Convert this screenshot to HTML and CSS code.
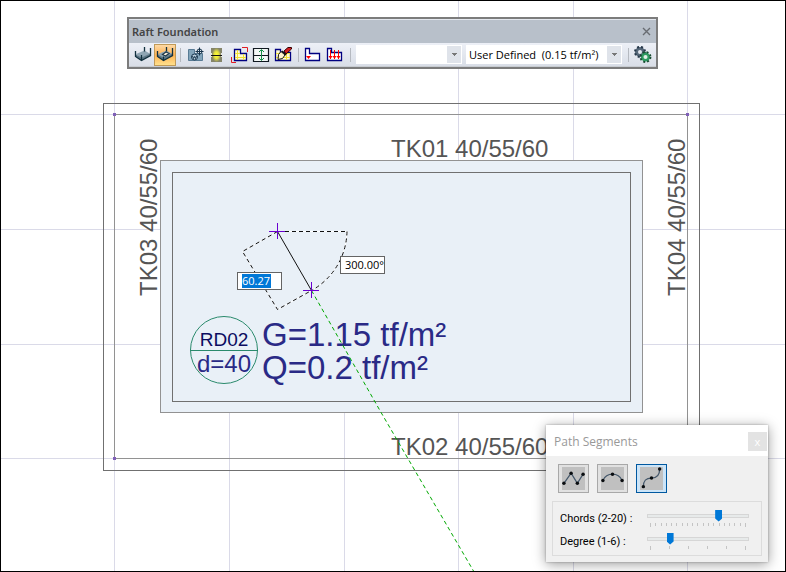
FILE: index.html
```
<!DOCTYPE html>
<html lang="en">
<head>
<meta charset="utf-8">
<title>Raft Foundation</title>
<link rel="stylesheet" href="styles.css">
</head>
<body>
<main class="workspace">
  <svg class="drawing" role="img" aria-label="Raft foundation plan">
    <g class="grid">
      <path d="M114.5 0V2000M229.5 0V2000M344.5 0V2000M458.5 0V2000M573.5 0V2000M687.5 0V2000"/>
      <path d="M0 114.5H3000M0 229.5H3000M0 344.5H3000M0 458.5H3000"/>
    </g>
    <rect class="edge" x="103.5" y="103.5" width="596" height="367"/>
    <rect class="axis" x="114.5" y="114.5" width="573" height="344"/>
    <rect class="slab" x="160.5" y="160.5" width="482" height="252"/>
    <rect class="edge" x="172.5" y="172.5" width="458" height="229"/>
    <g class="node">
      <rect x="113" y="113" width="3" height="3"/>
      <rect x="686" y="113" width="3" height="3"/>
      <rect x="113" y="457" width="3" height="3"/>
    </g>
    <g class="beam-name">
      <text x="391" y="157">TK01 40/55/60</text>
      <text x="391" y="455">TK02 40/55/60</text>
      <text transform="translate(157 296) rotate(-90)">TK03 40/55/60</text>
      <text transform="translate(685 296) rotate(-90)">TK04 40/55/60</text>
    </g>
    <g class="load">
      <text x="262" y="346">G=1.15 tf/m²</text>
      <text x="262" y="379">Q=0.2 tf/m²</text>
    </g>
    <g class="tag">
      <circle cx="224" cy="350" r="33.5"/>
      <path d="M190 350.5H258"/>
      <text class="tag-name" x="224" y="346">RD02</text>
      <text class="tag-depth" x="224" y="372">d=40</text>
    </g>
    <g class="rubber-back">
      <path d="M277.5 231.5L242.5 251.5L277.5 309.5L311.5 290.5M285 231.5H347M347 231.5A69 69 0 0 1 311.5 290.5"/>
    </g>
    <g class="rubber">
      <path d="M277.5 231.5L242.5 251.5L277.5 309.5L311.5 290.5M285 231.5H347M347 231.5A69 69 0 0 1 311.5 290.5"/>
    </g>
    <path class="segment" d="M277.5 231.5L311.5 290.5"/>
    <path class="guide" d="M311.5 290.5L380.5 411.5L473.5 571"/>
    <path class="cross" d="M269 231.5H285M277.5 223V239M303 290.5H319M311.5 282V298"/>
  </svg>

  <label class="readout readout-length"><input class="picked" type="text" value="60.27" aria-label="Length"></label>
  <label class="readout readout-angle"><input type="text" value="300.00°" aria-label="Angle"></label>

  <section class="toolbar" aria-label="Raft Foundation">
    <header class="toolbar-title">
      <h1>Raft Foundation</h1>
      <button type="button" class="toolbar-close" aria-label="Close">
        <svg width="9" height="9" viewBox="0 0 9 9"><path d="M1 1L8 8M8 1L1 8" stroke="#686c72" stroke-width="1.4"/></svg>
      </button>
    </header>
    <div class="tools">
      <button type="button" class="tool" aria-label="Slab">
        <svg viewBox="0 0 22 22"><path d="M4 10L12.500 6.500L18.500 10L9.500 14.500Z" fill="#8fa5b3"/><path d="M4 10.500L9.500 13.500L18.500 9.500V11.500L9.500 16.500L4 13Z" fill="#5d7686"/><path d="M3.500 7V12.500L9.500 16.500L18.500 11.500V4M12.500 3V7.500M9.500 11V16.500" fill="none" stroke="#12303e" stroke-width="1.300"/></svg>
      </button>
      <button type="button" class="tool active" aria-label="Slab opening">
        <svg viewBox="0 0 22 22"><path d="M4 10L12.500 6.500L18.500 10L9.500 14.500Z" fill="#8fa5b3"/><path d="M4 10.500L9.500 13.500L18.500 9.500V11.500L9.500 16.500L4 13Z" fill="#5d7686"/><path d="M3.500 7V12.500L9.500 16.500L18.500 11.500V4M12.500 3V7.500M9.500 12.500V16.500" fill="none" stroke="#12303e" stroke-width="1.300"/><path d="M8.500 10.500L12 8L15 9.500L11.500 12Z" fill="#fff3df" stroke="#203848" stroke-width="1.200"/></svg>
      </button>
      <span class="divider"></span>
      <button type="button" class="tool" aria-label="Slab properties">
        <svg viewBox="0 0 22 22"><path d="M4.500 5.500H10.500V9.500H18.500V16.500H4.500Z" fill="#83a5bb" stroke="#587b94"/><circle cx="10.500" cy="13" r="3" fill="#b9d0df" stroke="#17344c"/><path d="M8.500 12L9.500 14.500L10.500 12.500L11.500 14.500L12.500 12" fill="none" stroke="#17344c"/><circle cx="15.500" cy="7.500" r="2.500" fill="#d9e3ea" stroke="#17344c"/><path d="M11.500 7.500H19.500M15.500 3.500V11.500" stroke="#17344c"/></svg>
      </button>
      <button type="button" class="tool" aria-label="Slab strip">
        <svg viewBox="0 0 22 22"><defs><radialGradient id="glow"><stop offset="0" stop-color="#ff3"/><stop offset=".5" stop-color="#e6e23c"/><stop offset="1" stop-color="#85856a"/></radialGradient></defs><path d="M5 4H16V18H5Z" fill="#85856a"/><path d="M6 4H15V18H6Z" fill="url(#glow)"/><path d="M5 9V13M16 9V13" stroke="#e4e6ea" stroke-width="2"/><path d="M5 11.500H16" stroke="#111"/></svg>
      </button>
      <button type="button" class="tool" aria-label="Slab region">
        <svg viewBox="0 0 22 22"><path d="M6.500 5.500H12.500V9.500H18.500V16.500H6.500Z" fill="#fffbd0" stroke="#000080" stroke-width="1.300"/><path d="M7 9.500H12M7 13.500H18M9.500 6V16M15.500 10V16" stroke="#f0df35"/><path d="M14 3.500H19.500V8M3.500 13V18.500H8" fill="none" stroke="#e11b22"/></svg>
      </button>
      <button type="button" class="tool" aria-label="Stretch">
        <svg viewBox="0 0 22 22"><path d="M3.500 4.500H18.500V17.500H3.500ZM3.500 11.500H18.500" fill="#f4f8f7" stroke="#101820" stroke-width="1.200"/><path d="M11.500 6V16M9 8L11.500 5.500L14 8M9 14L11.500 16.500L14 14" fill="none" stroke="#149047"/></svg>
      </button>
      <button type="button" class="tool" aria-label="Clean region">
        <svg viewBox="0 0 22 22"><path d="M3.500 5.500H8.500V8.500H18.500V16.500H3.500Z" fill="#fffbd0" stroke="#000080" stroke-width="1.300"/><path d="M4 9.500H18M4 13.500H18M14.500 9V16" stroke="#f0df35"/><path d="M12 7L16 3.500H19.500V5L14 10Z" fill="#d51d20" stroke="#300"/><path d="M10 7L14 11" stroke="#111" stroke-width="1.500"/><path d="M9 7.500L13 11L10.500 14.500L6 15.500L6.500 10.500Z" fill="#fff4cf" stroke="#111"/></svg>
      </button>
      <span class="divider"></span>
      <button type="button" class="tool" aria-label="Point load">
        <svg viewBox="0 0 22 22"><path d="M3.500 4.500H7.500V9.500H17.500V16.500H3.500Z" fill="#fff" stroke="#000080" stroke-width="1.300"/><path d="M4 12H9L6.500 15Z" fill="#f00"/></svg>
      </button>
      <button type="button" class="tool" aria-label="Distributed load">
        <svg viewBox="0 0 22 22"><path d="M3.500 4.500H7.500V8.500H17.500V16.500H3.500Z" fill="#fff" stroke="#000080" stroke-width="1.300"/><path d="M6.500 6V15M10.500 6V15M14.500 6V15" stroke="#f00"/><path d="M4.500 12H8.500L6.500 15ZM8.500 12H12.500L10.500 15ZM12.500 12H16.500L14.500 15Z" fill="#f00"/></svg>
      </button>
      <span class="divider"></span>
      <select class="pick pick-name" aria-label="Slab name"><option></option></select>
      <select class="pick pick-load" aria-label="Load type"><option>User Defined&nbsp; (0.15 tf/m²)</option></select>
      <span class="divider"></span>
      <button type="button" class="tool" aria-label="Settings">
        <svg viewBox="0 0 22 22"><circle cx="8" cy="8" r="3.500" fill="none" stroke="#56687a" stroke-width="3"/><circle cx="8" cy="8" r="5" fill="none" stroke="#26384a" stroke-width="2" stroke-dasharray="2 2"/><circle cx="13.500" cy="13" r="3.300" fill="#e1efe5" stroke="#2e9b60" stroke-width="2.500"/><circle cx="13.500" cy="13" r="5" fill="none" stroke="#174c30" stroke-width="1.800" stroke-dasharray="2 2"/></svg>
      </button>
    </div>
  </section>

  <section class="dialog" aria-label="Path Segments">
    <header class="dialog-title">
      <h2>Path Segments</h2>
      <button type="button" class="dialog-close" aria-label="Close">x</button>
    </header>
    <div class="dialog-body">
      <div class="modes">
        <button type="button" class="mode" aria-label="Polyline">
          <svg viewBox="0 0 24 24"><path d="M2 17L9.500 6.500L16 17L22 7.500" fill="none" stroke="#44576a" stroke-width="1.300"/><g fill="#0a0d10"><circle cx="2" cy="17" r="1.800"/><circle cx="9.500" cy="6.500" r="1.800"/><circle cx="16" cy="17" r="1.800"/><circle cx="22" cy="7.500" r="1.800"/></g></svg>
        </button>
        <button type="button" class="mode" aria-label="Arc">
          <svg viewBox="0 0 24 24"><path d="M2 14Q5 7.500 12 7.500T22 14" fill="none" stroke="#44576a" stroke-width="1.300"/><g fill="#0a0d10"><circle cx="2" cy="14" r="1.800"/><circle cx="12" cy="7.500" r="1.800"/><circle cx="22" cy="14" r="1.800"/></g></svg>
        </button>
        <button type="button" class="mode chosen" aria-label="Spline" aria-pressed="true">
          <svg viewBox="0 0 24 24"><path d="M3.500 20.500C3.500 14 6 11.500 12 11.500S20.500 8 20.500 2" fill="none" stroke="#44576a" stroke-width="1.300"/><g fill="#0a0d10"><circle cx="3.500" cy="20.500" r="1.800"/><circle cx="12" cy="11.500" r="1.800"/><circle cx="20.500" cy="2" r="1.800"/></g></svg>
        </button>
      </div>
      <div class="settings">
        <label for="chords">Chords (2-20) :</label>
        <div class="slider">
          <input id="chords" type="range" min="2" max="20" value="15">
          <svg class="ticks" viewBox="0 0 102 4" preserveAspectRatio="none"><path d="M3.500 0V4M8.500 0V3M14.500 0V3M19.500 0V3M24.500 0V3M29.500 0V3M35.500 0V3M40.500 0V3M45.500 0V3M50.500 0V3M56.500 0V3M61.500 0V3M66.500 0V3M72.500 0V3M77.500 0V3M82.500 0V3M87.500 0V3M93.500 0V3M98.500 0V4"/></svg>
        </div>
        <label for="degree">Degree (1-6) :</label>
        <div class="slider">
          <input id="degree" type="range" min="1" max="6" value="2">
          <svg class="ticks" viewBox="0 0 102 4" preserveAspectRatio="none"><path d="M3.500 0V4M22.500 0V3M41.500 0V3M60.500 0V3M79.500 0V3M98.500 0V4"/></svg>
        </div>
      </div>
    </div>
  </section>
</main>
</body>
</html>
```
FILE: styles.css
```
* { box-sizing: border-box; }

body {
  margin: 0;
  font: 12px/16px "Noto Sans", "Open Sans", sans-serif;
  color: #000;
}

button, input, select { font: inherit; color: inherit; margin: 0; padding: 0; border: 0; }
h1, h2 { margin: 0; font: inherit; }

.workspace {
  position: relative;
  height: 100vh;
  overflow: hidden;
  background: #fff;
}
.workspace::after {
  content: "";
  position: absolute;
  inset: 0;
  border: 1px solid #000;
  pointer-events: none;
}

/* Drawing canvas */
.drawing { display: block; width: 100%; height: 100%; font-family: "Liberation Sans", Arial, sans-serif; }
.grid { stroke: #dadae8; fill: none; }
.edge { fill: none; stroke: #707070; }
.axis { fill: none; stroke: #929292; }
.slab { fill: #e9f0f7; stroke: #929292; }
.node { fill: #8060b8; }
.beam-name { font-size: 24px; fill: #555; }
.load { font-size: 33px; fill: #2a2a86; }
.tag { fill: none; stroke: #2a8a6c; }
.tag text { stroke: none; text-anchor: middle; }
.tag-name { font-size: 19px; fill: #0c0c60; }
.tag-depth { font-size: 24px; fill: #2a2a86; }
.rubber-back { fill: none; stroke: #fff; }
.rubber { fill: none; stroke: #111; stroke-dasharray: 4 3; }
.segment { stroke: #111; }
.guide { fill: none; stroke: #00a800; stroke-dasharray: 4 3; }
.cross { stroke: #6a00d0; }

.readout {
  position: absolute;
  display: flex;
  width: 45px;
  height: 18px;
  padding: 1px 0 1px 4px;
  border: 1px solid #646464;
  background: #fff;
  font-family: "Open Sans", sans-serif;
  font-size: 11px;
  line-height: 14px;
}
.readout input { width: 100%; height: 14px; background: none; }
.readout .picked { width: 29px; background: #0078d7; color: #fff; }
.readout-length { left: 237px; top: 272px; }
.readout-angle { left: 340px; top: 256px; }

/* Floating toolbar */
.toolbar {
  position: absolute;
  left: 127px;
  top: 17px;
  border: 2px solid #7c7c7c;
  background: #b8c0ca;
}
.toolbar-title {
  display: flex;
  align-items: center;
  justify-content: space-between;
  height: 24px;
  padding: 0 5px 0 3px;
  border-top: 1px solid #e3e7ee;
  color: #444;
  font-size: 11px;
  font-weight: 600;
}
.toolbar-close { display: flex; background: none; }
.tools {
  display: flex;
  align-items: center;
  height: 24px;
  padding: 0 2px 0 3px;
  border-bottom: 1px solid #c8ccd2;
  background: linear-gradient(#edf0f7, #d9dee7);
}
.tool { display: flex; width: 22px; height: 22px; background: none; }
.tool svg { width: 22px; height: 22px; }
.tool.active {
  border: 1px solid #c09a58;
  background: linear-gradient(#fdd9a5, #ffb252 50%, #ffe08c);
}
.tool.active svg { margin: -1px; flex: none; }
.divider {
  width: 8px;
  height: 14px;
  background: linear-gradient(#b5b9c0, #b5b9c0) 4px 0 / 1px 100% no-repeat;
}
.pick {
  appearance: none;
  height: 19px;
  margin-left: 2px;
  padding-left: 3px;
  background-color: #fff;
  background-image:
    linear-gradient(#777, #777), linear-gradient(#777, #777), linear-gradient(#777, #777),
    linear-gradient(#dfe3ea, #dfe3ea);
  background-repeat: no-repeat;
  background-size: 5px 1px, 3px 1px, 1px 1px, 14px 17px;
  background-position: right 5px top 8px, right 6px top 9px, right 7px top 10px, right 1px top 1px;
  font-size: 11px;
}
.pick-name { width: 106px; }
.pick-load { width: 156px; margin: 0 2px 0 4px; font-family: "Open Sans", sans-serif; }

/* Path segments window */
.dialog {
  position: absolute;
  left: 546px;
  top: 425px;
  width: 222px;
  background: #f0f0f0;
  box-shadow: 0 2px 12px rgba(0, 0, 0, .4), 0 0 2px rgba(0, 0, 0, .3);
}
.dialog-title {
  display: flex;
  align-items: center;
  justify-content: space-between;
  height: 31px;
  padding: 2px 1px 0 8px;
  background: #fff;
  color: #999;
  font-family: "Open Sans", sans-serif;
}
.dialog-close { width: 19px; height: 19px; background: #e3e3e3; color: #fff; font-size: 11px; line-height: 16px; }
.dialog-body { padding: 8px 6px 6px; }
.modes { display: flex; gap: 8px; padding-left: 6px; }
.mode { width: 31px; height: 29px; padding: 2px 3px; border: 1px solid #a8a8a8; background: #e1e1e1; }
.mode svg { display: block; width: 23px; height: 23px; background: #c0c0c0; }
.mode.chosen { border-color: #0058a0; background: #cce4f7; }
.settings {
  display: grid;
  grid-template-columns: 87px 102px;
  grid-auto-rows: 23px;
  align-items: center;
  margin-top: 8px;
  padding: 5px 7px 2px;
  border: 1px solid #dcdcdc;
  font: 11px/16px Roboto, sans-serif;
}
.slider { height: 19px; }
.slider input { display: block; width: 100%; height: 13px; appearance: none; background: none; }
.slider input::-webkit-slider-runnable-track {
  height: 4px;
  border: 1px solid #d6d6d6;
  background: #e7eaea;
}
.slider input::-webkit-slider-thumb {
  appearance: none;
  width: 7px;
  height: 12px;
  margin-top: -5px;
  background: #0078d7;
  clip-path: polygon(0 0, 100% 0, 100% 75%, 50% 100%, 0 75%);
}
.ticks { display: block; width: 100%; height: 4px; margin-top: 1px; stroke: #c4c4c4; }
```
